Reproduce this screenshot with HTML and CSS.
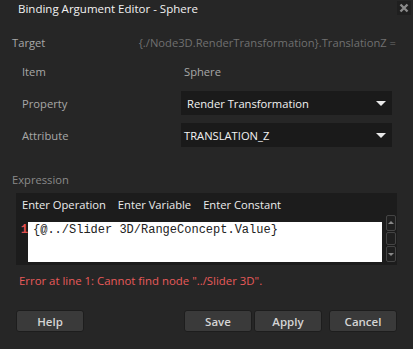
FILE: index.html
```html
<!DOCTYPE html>
<html lang="en">
<head>
    <meta charset="UTF-8">
    <title>Binding Argument Editor - Sphere</title>
    <link rel="stylesheet" href="styles.css">
</head>
<body>
    <div class="dialog">
        <div class="titlebar">
            <span class="title">Binding Argument Editor - Sphere</span>
            <span class="close">
                <svg width="10" height="10" viewBox="0 0 10 10"><path d="M1.5 1.5 L8.5 8.5 M8.5 1.5 L1.5 8.5" stroke="#8a8a8a" stroke-width="2.4"/></svg>
            </span>
        </div>

        <div class="target">
            <span class="label">Target</span>
            <span class="target-value">{./Node3D.RenderTransformation}.TranslationZ =</span>
        </div>

        <div class="fields">
            <span class="label">Item</span>
            <span class="item-value">Sphere</span>

            <span class="label">Property</span>
            <div class="combo">
                <span>Render Transformation</span>
                <span class="arrow"></span>
            </div>

            <span class="label">Attribute</span>
            <div class="combo attr">
                <span>TRANSLATION_Z</span>
                <span class="arrow"></span>
            </div>
        </div>

        <div class="expr-label">Expression</div>
        <div class="editor">
            <div class="toolbar">
                <span>Enter Operation</span>
                <span>Enter Variable</span>
                <span>Enter Constant</span>
            </div>
            <div class="code-row">
                <span class="line-no">1</span>
                <div class="code">{@../Slider 3D/RangeConcept.Value}</div>
                <div class="scrollbar">
                    <span class="sb-btn"><span class="up"></span></span>
                    <span class="sb-thumb"></span>
                    <span class="sb-btn"><span class="down"></span></span>
                </div>
            </div>
        </div>

        <div class="error">Error at line 1: Cannot find node "../Slider 3D".</div>

        <div class="buttons">
            <button class="btn">Help</button>
            <span class="spacer"></span>
            <button class="btn">Save</button>
            <button class="btn">Apply</button>
            <button class="btn cancel">Cancel</button>
        </div>
    </div>
</body>
</html>
```

FILE: styles.css
```css
body {
    margin: 0;
    padding: 0;
    background-color: #262626;
    font-family: "Open Sans", "Noto Sans", sans-serif;
    font-size: 11.2px;
}
.dialog {
    width: 413px;
    height: 349px;
    background-color: #262626;
    color: #d8d8d8;
    overflow: hidden;
}
.titlebar {
    height: 22px;
    display: flex;
    align-items: center;
    justify-content: space-between;
    padding-left: 18px;
    padding-right: 2px;
}
.title {
    color: #f2f2f2;
    font-size: 11.5px;
    margin-top: -5px;
}
.close {
    width: 14px;
    height: 14px;
    background-color: #1f1f1f;
    display: flex;
    align-items: center;
    justify-content: center;
    margin-top: -6px;
}
.label {
    color: #a8a8a8;
}
.target {
    display: flex;
    justify-content: space-between;
    padding: 13px 17px 0 12px;
    height: 20px;
}
.target-value {
    color: #707070;
}
.fields {
    display: grid;
    grid-template-columns: 159px 211px;
    grid-auto-rows: 24px;
    row-gap: 8px;
    padding: 4px 0 0 22px;
    align-items: center;
}
.item-value {
    color: #a8a8a8;
    padding-left: 3px;
}
.combo {
    height: 24px;
    background-color: #1a1a1a;
    display: flex;
    align-items: center;
    justify-content: space-between;
    padding: 0 6px 0 6px;
    color: #f2f2f2;
}
.combo.attr {
    padding-left: 3px;
}
.arrow {
    width: 0;
    height: 0;
    border-left: 5px solid transparent;
    border-right: 5px solid transparent;
    border-top: 5px solid #e8e8e8;
}
.expr-label {
    color: #8a8a8a;
    padding: 25px 0 0 12px;
    height: 18px;
}
.editor {
    margin: 3px 16px 0 16px;
    background-color: #1c1c1c;
    height: 72px;
}
.toolbar {
    display: flex;
    gap: 12px;
    padding: 4px 0 0 6px;
    height: 29px;
    box-sizing: border-box;
    color: #ececec;
}
.code-row {
    display: flex;
    height: 40px;
}
.line-no {
    width: 12px;
    color: #e05050;
    font-family: "Liberation Mono", monospace;
    font-size: 12px;
    font-weight: bold;
    text-align: right;
    padding-top: 1px;
}
.code {
    width: 354px;
    background-color: #ffffff;
    color: #222222;
    font-family: "Liberation Mono", monospace;
    font-size: 12px;
    padding: 1px 0 0 5px;
    box-sizing: border-box;
}
.scrollbar {
    display: flex;
    flex-direction: column;
    gap: 1px;
    margin: -7px 0 0 4px;
    width: 10px;
}
.sb-btn, .sb-thumb {
    border: 1px solid #444444;
    border-radius: 2px;
    background-color: #1f1f1f;
    display: flex;
    align-items: center;
    justify-content: center;
}
.sb-btn {
    height: 14px;
}
.sb-thumb {
    height: 12px;
}
.up {
    border-left: 3px solid transparent;
    border-right: 3px solid transparent;
    border-bottom: 3px solid #888888;
}
.down {
    border-left: 3px solid transparent;
    border-right: 3px solid transparent;
    border-top: 3px solid #888888;
}
.error {
    color: #e85a5a;
    font-size: 11.4px;
    padding: 8px 0 0 19px;
}
.buttons {
    display: flex;
    padding: 22px 16px 0 16px;
    gap: 2px;
}
.spacer {
    flex: 1;
}
.btn {
    width: 68px;
    height: 22px;
    background-color: #3a3a3a;
    border: 1px solid #1d1d1d;
    border-radius: 3px;
    color: #d4d4d4;
    font-family: "Open Sans", "Noto Sans", sans-serif;
    font-size: 11.5px;
    font-weight: 600;
    padding: 0;
}
.cancel {
    margin-left: 5px;
}
```
